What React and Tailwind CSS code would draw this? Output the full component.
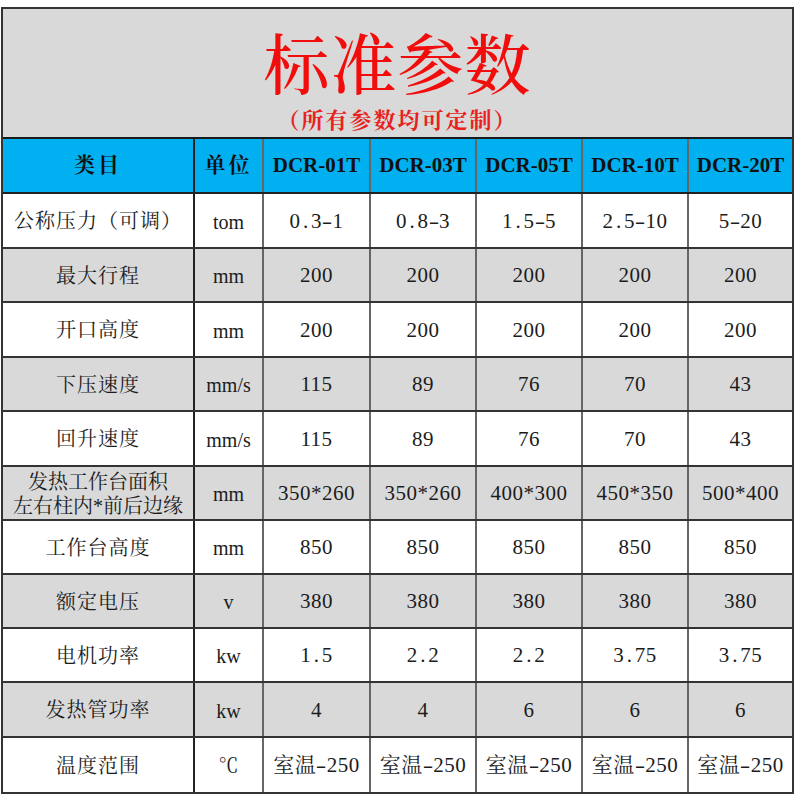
import React from "react";

const widths = ["w-[192px]", "w-[69px]", "w-[107px]", "w-[106px]", "w-[106px]", "w-[106px]", "w-[103px]"];

const rows = [
  { label: ["公称压力（可调）"], unit: "tom", vals: ["0.3-1", "0.8-3", "1.5-5", "2.5-10", "5-20"], h: "h-[55px]", gray: false },
  { label: ["最大行程"], unit: "mm", vals: ["200", "200", "200", "200", "200"], h: "h-[54px]", gray: true },
  { label: ["开口高度"], unit: "mm", vals: ["200", "200", "200", "200", "200"], h: "h-[55px]", gray: false },
  { label: ["下压速度"], unit: "mm/s", vals: ["115", "89", "76", "70", "43"], h: "h-[54px]", gray: true },
  { label: ["回升速度"], unit: "mm/s", vals: ["115", "89", "76", "70", "43"], h: "h-[55px]", gray: false },
  { label: ["发热工作台面积", "左右柱内*前后边缘"], unit: "mm", vals: ["350*260", "350*260", "400*300", "450*350", "500*400"], h: "h-[54px]", gray: true },
  { label: ["工作台高度"], unit: "mm", vals: ["850", "850", "850", "850", "850"], h: "h-[54px]", gray: false },
  { label: ["额定电压"], unit: "v", vals: ["380", "380", "380", "380", "380"], h: "h-[54px]", gray: true },
  { label: ["电机功率"], unit: "kw", vals: ["1.5", "2.2", "2.2", "3.75", "3.75"], h: "h-[54px]", gray: false },
  { label: ["发热管功率"], unit: "kw", vals: ["4", "4", "6", "6", "6"], h: "h-[55px]", gray: true },
  { label: ["温度范围"], unit: "℃", vals: ["室温-250", "室温-250", "室温-250", "室温-250", "室温-250"], h: "h-[54px]", gray: false, last: true },
];

const models = ["DCR-01T", "DCR-03T", "DCR-05T", "DCR-10T", "DCR-20T"];

function Cell({ i, children, className = "" }) {
  const border = i === 6 ? "" : i === 0 ? "border-r-2 border-[#222]" : "border-r-2 border-[#666]";
  return (
    <div className={`${widths[i]} shrink-0 h-full flex flex-col items-center justify-center text-center ${border} ${className}`}>
      {children}
    </div>
  );
}

function Val({ text }) {
  const parts = text.split(/([.\-])/);
  return (
    <div className="whitespace-nowrap">
      {parts.map((p, k) =>
        p === "." ? (
          <span key={k} className="inline-block w-[10.5px] text-center">{p}</span>
        ) : p === "-" ? (
          <span key={k} className="inline-block w-[10.5px] text-center scale-x-150">{p}</span>
        ) : (
          <span key={k}>{p}</span>
        )
      )}
    </div>
  );
}

export default function App() {
  return (
    <div className="w-[800px] h-[800px] bg-white pt-[7px] pl-[1px] font-['Liberation_Serif','Noto_Serif_CJK_SC','Noto_Sans_CJK_SC',serif] text-[#1c1c1c]">
      <div className="w-[793px] border-2 border-[#333]">
        <div className="h-[130px] bg-[#d9d9d9] border-b-2 border-[#1a1a1a] flex flex-col items-center">
          <div className="mt-[18px] text-[66px] leading-[80px] font-medium text-[#f20d0d] tracking-[1px]">标准参数</div>
          <div className="mt-[1px] text-[22px] leading-[26px] font-bold text-[#e8211d] tracking-[2px]">（所有参数均可定制）</div>
        </div>
        <div className="h-[55px] bg-[#00b0f0] border-b-2 border-[#222] flex font-bold text-[#111]">
          <Cell i={0} className="text-[21px] tracking-[3px]">类目</Cell>
          <Cell i={1} className="text-[21px] tracking-[3px]">单位</Cell>
          {models.map((m, k) => (
            <Cell key={m} i={k + 2} className="text-[21px]">{m}</Cell>
          ))}
        </div>
        {rows.map((r, ri) => (
          <div
            key={ri}
            className={`${r.h} flex ${r.gray ? "bg-[#d9d9d9]" : "bg-white"} ${r.last ? "" : "border-b-2 border-[#333]"}`}
          >
            <Cell i={0} className="text-[20px] leading-[24px] pt-[1px]">
              {r.label.map((l) => (
                <div key={l} className={r.label.length > 1 ? "tracking-[0px]" : "tracking-[1px]"}>{l}</div>
              ))}
            </Cell>
            <Cell i={1} className="text-[20px] pt-[2px]">{r.unit}</Cell>
            {r.vals.map((v, k) => (
              <Cell key={k} i={k + 2} className="text-[21px] tracking-[0.5px] pt-[2px]">
                <Val text={v} />
              </Cell>
            ))}
          </div>
        ))}
      </div>
    </div>
  );
}
